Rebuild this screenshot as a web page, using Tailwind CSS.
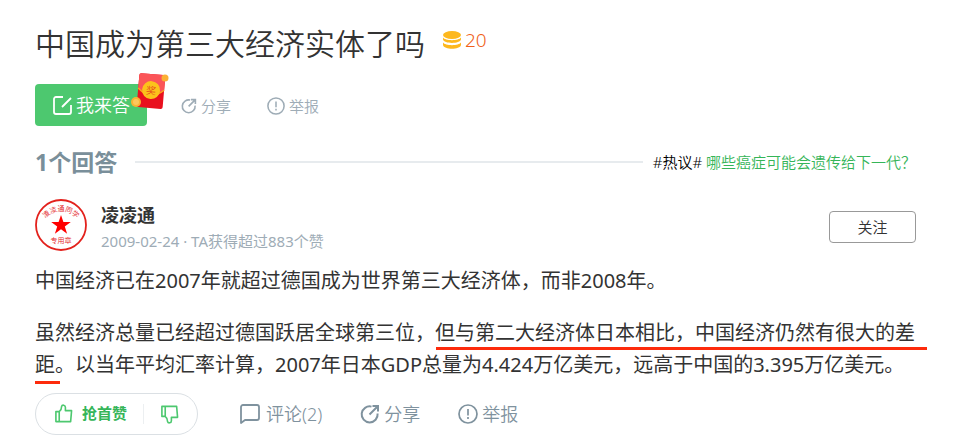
<!DOCTYPE html>
<html lang="zh-CN">
<head>
    <meta charset="UTF-8">
    <title>中国成为第三大经济实体了吗</title>
    <meta name="viewport" content="width=device-width, initial-scale=1.0">
    <script src="https://cdn.jsdelivr.net/npm/@tailwindcss/browser@4"></script>
</head>
<body class="bg-white text-[#333] font-[350] font-['Noto_Sans','Noto_Sans_CJK_SC',sans-serif]">

<!-- shared icons -->
<svg class="hidden">
    <symbol id="icon-share" viewBox="0 0 20 20" fill="none" stroke="currentColor" stroke-width="2">
        <path d="M11.5 2.6A8 8 0 1 0 17.6 9.5M9.5 10.5l7.5-7.5M12.5 2H18v5.5"/>
    </symbol>
    <symbol id="icon-report" viewBox="0 0 20 20" fill="none" stroke="currentColor" stroke-width="1.7">
        <circle cx="10" cy="10" r="9"/>
        <path d="M10 5v6.5M10 13v2"/>
    </symbol>
    <symbol id="icon-thumb" viewBox="0 0 20 20" fill="none" stroke="currentColor" stroke-width="1.7" stroke-linejoin="round">
        <path d="M2 8h3.500v10.500H2zM5.500 8C7.500 6.500 8 5 8 2.500 8.500.5 12 .8 12 3.500V7h6.500l-1 11.500h-12"/>
    </symbol>
</svg>

<main class="pl-[35px] pr-12 pt-6">
    <!-- question -->
    <header class="flex items-start">
        <h1 class="text-[30px] leading-10">中国成为第三大经济实体了吗</h1>
        <div class="ml-[18px] flex h-8 items-center gap-1 text-[19px] text-[#f06018]">
            <svg class="size-[18px]" viewBox="0 0 18 18" fill="#fdb81e">
                <ellipse cx="9" cy="4" rx="9" ry="4"/>
                <path d="M0 6.500c2 3.500 16 3.500 18 0V8.500c-1 4.500-17 4.500-18 0zM0 11.500c2 3.500 16 3.500 18 0V14c-1 5-17 5-18 0z"/>
            </svg>
            20
        </div>
    </header>

    <div class="mt-5 flex items-center text-[15px] text-[#9eacb6]">
        <button class="relative flex h-[42px] w-28 items-center gap-1 rounded bg-[#4dc86f] pl-[18px] text-lg text-white">
            <svg class="size-[19px]" viewBox="0 0 19 19" fill="none" stroke="currentColor" stroke-width="1.8">
                <path d="M10 1H3a2 2 0 0 0-2 2v13a2 2 0 0 0 2 2h13a2 2 0 0 0 2-2V9M9 11l9-9"/>
            </svg>
            我来答
            <!-- red envelope -->
            <svg class="absolute -top-3 left-[94px] h-[38px] w-10" viewBox="0 0 40 38">
                <g transform="rotate(5 21 19)">
                    <rect x="9" y="2" width="26" height="34" rx="2" fill="#e9101e"/>
                    <path d="M9 17V4a2 2 0 0 1 2-2h22a2 2 0 0 1 2 2v13Q22 29 9 17z" fill="#fb5558"/>
                    <path d="M9 17q13 12 26 0" fill="none" stroke="#f9a51b" stroke-width="1.5"/>
                    <circle cx="22" cy="18" r="9" fill="#fcc21b"/>
                    <text x="22" y="22" text-anchor="middle" font-size="10" fill="#e5421c">奖</text>
                </g>
                <circle cx="7" cy="30" r="5" fill="#f9b233"/>
                <circle cx="7" cy="30" r="3" fill="#fdc75c"/>
                <circle cx="36" cy="6" r="3.5" fill="#fbb034"/>
            </svg>
        </button>
        <a href="#" class="ml-[34px] mt-[2px] flex items-center gap-1">
            <svg class="size-4"><use href="#icon-share"/></svg>分享
        </a>
        <a href="#" class="ml-9 mt-[2px] flex items-center gap-1">
            <svg class="size-[18px]"><use href="#icon-report"/></svg>举报
        </a>
    </div>

    <!-- answer count and hot topic -->
    <div class="mt-5 flex items-center">
        <h2 class="text-[23px] leading-8 font-bold text-[#7a8f9a]">1个回答</h2>
        <div class="ml-[18px] mr-[10px] h-0.5 flex-1 bg-[#e7ebee]"></div>
        <p class="text-[15px] text-black">#热议# <a href="#" class="text-[#35b558]">哪些癌症可能会遗传给下一代？</a></p>
    </div>

    <!-- author -->
    <div class="mt-[19px] flex items-center">
        <svg class="size-[52px]" viewBox="0 0 52 52" fill="#e3211c">
            <circle cx="26" cy="26" r="25" fill="#fff" stroke="#e3211c" stroke-width="1.8"/>
            <path d="M26 16l2.400 7.100h7.400l-6 4.400 2.300 7.200-6.100-4.400-6.100 4.400 2.300-7.200-6-4.400h7.400z" fill="#f00"/>
            <path id="stamp-arc" d="M12 18a20 20 0 0 1 28 0" fill="none"/>
            <text font-size="7"><textPath href="#stamp-arc" startOffset="50%" text-anchor="middle">凌凌通同学</textPath></text>
            <text x="26" y="44" font-size="7" text-anchor="middle">专用章</text>
        </svg>
        <div class="ml-[14px] flex-1 pt-1">
            <h3 class="text-lg leading-7 font-bold">凌凌通</h3>
            <p class="text-[15px] leading-6 font-normal text-[#9eacb6]">2009-02-24 · TA获得超过883个赞</p>
        </div>
        <button class="mt-1 h-8 w-[87px] rounded border border-[#999] text-[15px]">关注</button>
    </div>

    <!-- answer -->
    <article class="mt-3 space-y-5 text-xl leading-8 font-normal">
        <p>中国经济已在2007年就超过德国成为世界第三大经济体，而非2008年。</p>
        <div class="relative">
            <p>虽然经济总量已经超过德国跃居全球第三位，但与第二大经济体日本相比，中国经济仍然有很大的差距。以当年平均汇率计算，2007年日本GDP总量为4.424万亿美元，远高于中国的3.395万亿美元。</p>
            <div class="absolute top-[30px] left-[401px] -right-[11px] h-[3px] bg-[#fd2b0c]"></div>
            <div class="absolute top-16 left-0 h-[3px] w-[25px] bg-[#fd2b0c]"></div>
        </div>
    </article>

    <footer class="mt-3 flex items-center text-lg text-[#7f929e]">
        <div class="flex h-[42px] w-[163px] items-center rounded-full border border-[#dbe0e4] pl-[18px] text-[#35b558]">
            <button class="flex items-center gap-[9px] text-[15px] font-bold">
                <svg class="size-[19px] text-[#4dc86f]"><use href="#icon-thumb"/></svg>抢首赞
            </button>
            <span class="ml-4 h-5 w-px bg-[#eceff1]"></span>
            <button class="ml-4" aria-label="踩">
                <svg class="size-[19px] -scale-y-100 text-[#4dc86f]"><use href="#icon-thumb"/></svg>
            </button>
        </div>
        <a href="#" class="ml-[42px] flex items-center gap-[6px]">
            <svg class="size-5" viewBox="0 0 20 20" fill="none" stroke="currentColor" stroke-width="1.8" stroke-linejoin="round">
                <path d="M1 19V3a2 2 0 0 1 2-2h14a2 2 0 0 1 2 2v11a2 2 0 0 1-2 2H5z"/>
            </svg>评论(2)
        </a>
        <a href="#" class="ml-[38px] flex items-center gap-1">
            <svg class="size-5"><use href="#icon-share"/></svg>分享
        </a>
        <a href="#" class="ml-[38px] flex items-center gap-1">
            <svg class="size-5"><use href="#icon-report"/></svg>举报
        </a>
    </footer>
</main>

</body>
</html>
